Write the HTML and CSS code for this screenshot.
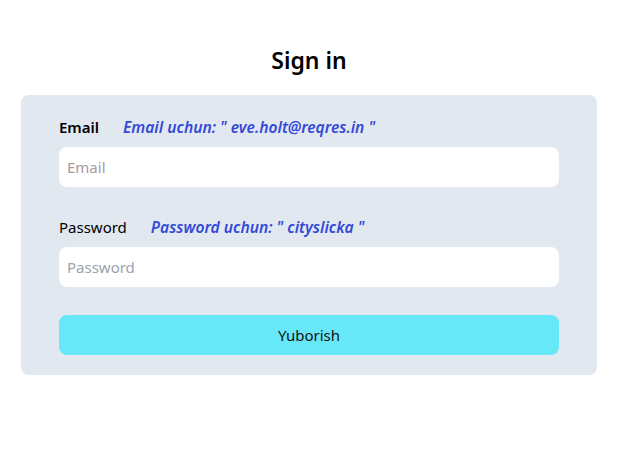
FILE: index.html
```html
<!DOCTYPE html>
<html lang="uz">
<head>
<meta charset="utf-8">
<title>Sign in</title>
<link rel="stylesheet" href="styles.css">
</head>
<body>
<main class="page">
  <h1 class="title">Sign in</h1>
  <form class="card">
    <div class="label-row">
      <label class="label label-strong" for="email">Email</label>
      <span class="hint">Email uchun: " eve.holt@reqres.in "</span>
    </div>
    <input class="field" id="email" type="email" placeholder="Email">
    <div class="label-row label-row-gap">
      <label class="label" for="password">Password</label>
      <span class="hint">Password uchun: " cityslicka "</span>
    </div>
    <input class="field" id="password" type="password" placeholder="Password">
    <button class="submit" type="button">Yuborish</button>
  </form>
</main>
</body>
</html>
```
FILE: styles.css
```css
* { box-sizing: border-box; }
html, body { margin: 0; padding: 0; background: #ffffff; }
body {
  font-family: "Noto Sans", "Open Sans", sans-serif;
  color: #111111;
}
.page {
  width: 618px;
  padding-top: 44px;
}
.title {
  margin: 0 0 19px;
  text-align: center;
  font-size: 23px;
  line-height: 32px;
  font-weight: 600;
  color: #000;
}
.card {
  width: 576px;
  margin: 0 auto;
  background: #e2e8f0;
  border-radius: 8px;
  padding: 20px 38px 20px;
  display: flex;
  flex-direction: column;
}
.label-row {
  display: flex;
  align-items: center;
  gap: 24px;
  height: 24px;
  margin-bottom: 8px;
}
.label-row-gap { margin-top: 28px; }
.label {
  font-size: 15px;
  color: #000;
}
.label-strong { font-weight: 600; }
.hint {
  font-size: 15.6px;
  font-style: italic;
  font-weight: 600;
  color: #3448d8;
}
.field {
  width: 500px;
  height: 40px;
  border: none;
  border-radius: 8px;
  background: #fff;
  padding: 0 8px;
  font-family: inherit;
  font-size: 15px;
  outline: none;
}
.field::placeholder { color: #9ca3af; }
#email::placeholder { color: #a89a9f; }
.submit {
  margin-top: 28px;
  width: 500px;
  height: 40px;
  border: none;
  border-radius: 8px;
  background: #67e8f9;
  font-family: inherit;
  font-size: 15px;
  color: #111;
}
```
